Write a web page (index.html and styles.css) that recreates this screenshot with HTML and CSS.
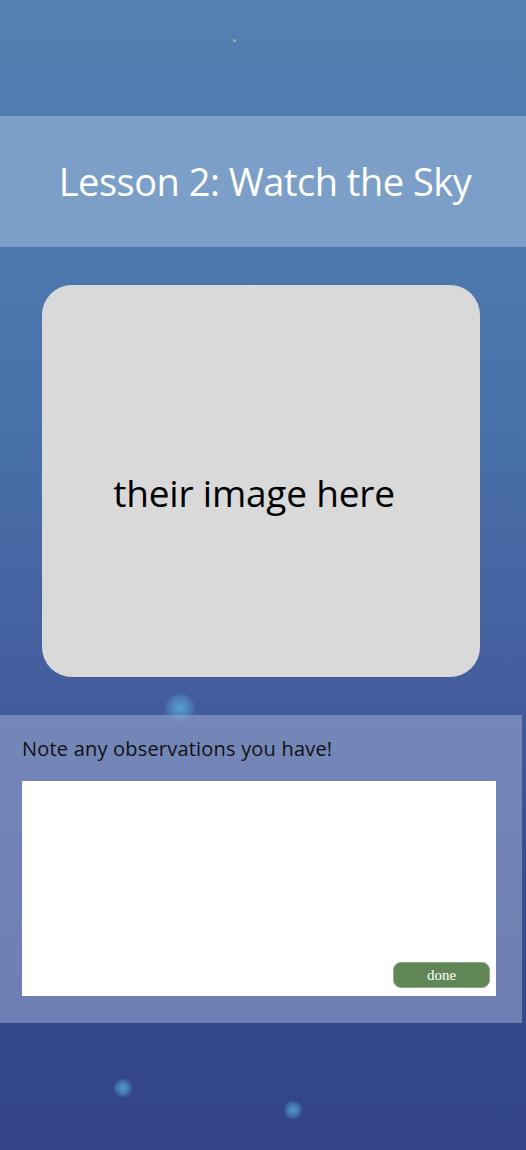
FILE: index.html
```html
<!DOCTYPE html>
<html lang="en">
<head>
<meta charset="utf-8">
<title>Lesson 2: Watch the Sky</title>
<link rel="stylesheet" href="styles.css">
</head>
<body>
<div class="page">
  <span class="star star-a"></span>
  <span class="bokeh bokeh-a"></span>
  <span class="bokeh bokeh-b"></span>
  <span class="bokeh bokeh-c"></span>
  <header class="title-band">
    <h1 class="title">Lesson 2: Watch the Sky</h1>
  </header>
  <section class="image-card">
    <p class="image-text">their image here</p>
  </section>
  <section class="notes">
    <label class="notes-label" for="obs">Note any observations you have!</label>
    <div class="notes-box">
      <textarea id="obs" class="notes-input"></textarea>
      <button class="done-btn" type="button">done</button>
    </div>
  </section>
</div>
</body>
</html>
```

FILE: styles.css
```css
html, body {
  margin: 0;
  padding: 0;
}
body {
  width: 526px;
  height: 1150px;
  overflow: hidden;
  font-family: "Open Sans", "Noto Sans", sans-serif;
}
.page {
  position: relative;
  width: 526px;
  height: 1150px;
  display: flex;
  flex-direction: column;
  padding-top: 116px;
  box-sizing: border-box;
  background: linear-gradient(180deg, #5480b1 0%, #4d79ae 20%, #4873aa 35%, #445f9e 58%, #3a4d92 75%, #32438a 100%);
  overflow: hidden;
}
.star {
  position: absolute;
  border-radius: 50%;
}
.star-a {
  left: 233px;
  top: 39px;
  width: 3px;
  height: 3px;
  background: #b7a99a;
}
.bokeh {
  position: absolute;
  border-radius: 50%;
  background: radial-gradient(circle, rgba(90,170,220,0.85) 0%, rgba(90,170,220,0.35) 50%, rgba(90,170,220,0) 70%);
}
.bokeh-a { left: 164px; top: 692px; width: 32px; height: 32px; }
.bokeh-b { left: 113px; top: 1078px; width: 20px; height: 20px; }
.bokeh-c { left: 283px; top: 1100px; width: 20px; height: 20px; }
.title-band {
  position: relative;
  height: 131px;
  background: rgba(160, 190, 220, 0.55);
  display: flex;
  align-items: center;
  justify-content: center;
}
.title {
  margin: 0;
  color: #ffffff;
  font-weight: 400;
  font-size: 38px;
  letter-spacing: -0.5px;
  transform: translate(2px, -1px);
}
.image-card {
  position: relative;
  margin: 38px 0 0 42px;
  width: 438px;
  height: 392px;
  border-radius: 30px;
  background: #d9d9d9;
  display: flex;
  align-items: center;
  justify-content: center;
}
.image-text {
  margin: 0;
  color: #000;
  font-size: 37px;
  letter-spacing: -0.2px;
  transform: translate(-7px, 11px);
}
.notes {
  position: relative;
  margin-top: 38px;
  width: 522px;
  height: 308px;
  box-sizing: border-box;
  padding: 20px 26px 27px 22px;
  background: rgba(150, 165, 205, 0.6);
  display: flex;
  flex-direction: column;
}
.notes-label {
  color: #111;
  font-size: 20px;
  letter-spacing: 0.2px;
  line-height: 28px;
  height: 46px;
}
.notes-box {
  position: relative;
  flex: 1;
  background: #fff;
}
.notes-input {
  width: 100%;
  height: 100%;
  border: none;
  resize: none;
  outline: none;
  background: transparent;
  box-sizing: border-box;
}
.done-btn {
  position: absolute;
  right: 6px;
  bottom: 8px;
  width: 97px;
  height: 26px;
  border: 1px solid #8aa882;
  box-sizing: border-box;
  border-radius: 8px;
  background: #618655;
  color: #fff;
  font-family: "Liberation Serif", "DejaVu Serif", serif;
  font-size: 15px;
  padding: 0;
}
```
